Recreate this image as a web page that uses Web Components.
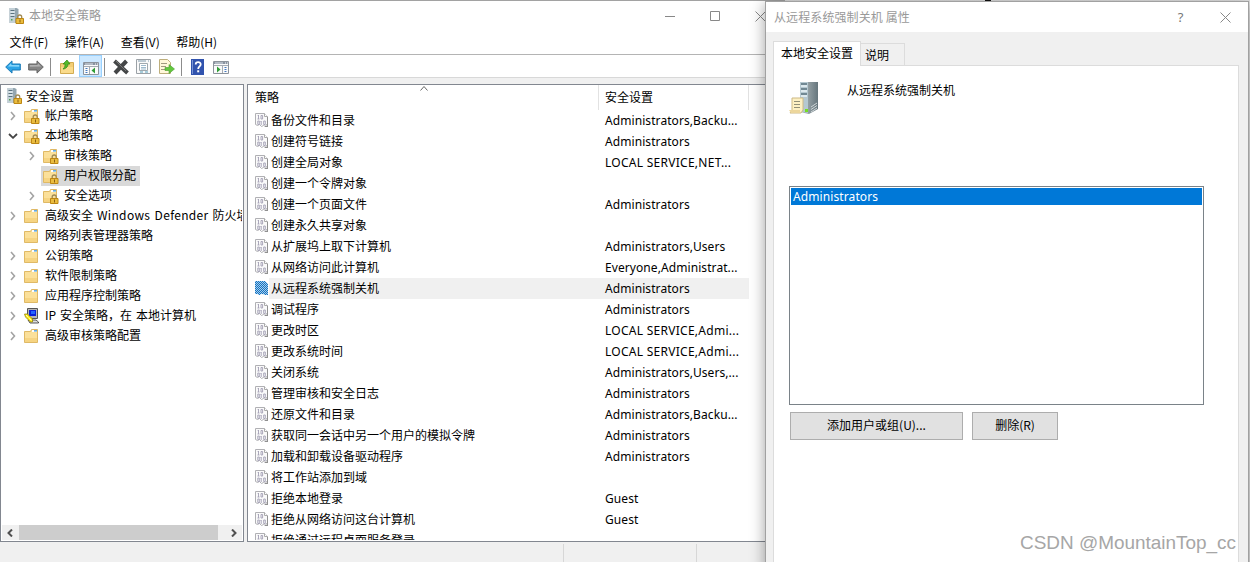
<!DOCTYPE html>
<html lang="zh-CN"><head><meta charset="utf-8"><title>本地安全策略</title>
<style>
body{margin:0;width:1250px;height:562px;overflow:hidden;position:relative;background:#c4c4c4;color:#000;font:12px/20px "Noto Sans CJK SC",sans-serif}
sec-console{position:absolute;left:0;top:0}
prop-dialog{position:absolute;left:765px;top:1px}
back-edge{position:absolute;left:766px;top:0}
water-mark{position:absolute;left:1020px;top:530px}
</style></head><body>
<back-edge></back-edge>
<sec-console></sec-console>
<prop-dialog title-text="从远程系统强制关机 属性"></prop-dialog>
<water-mark>CSDN @MountainTop_cc</water-mark>
<script>
const define=(name,html)=>customElements.define(name,class extends HTMLElement{
  constructor(){super();this.attachShadow({mode:'open'})}
  connectedCallback(){const t=document.createElement('template');t.innerHTML=typeof html==='function'?html(this):html;this.shadowRoot.replaceChildren(t.content.cloneNode(true))}
});
const folder='<path d="M.5 3.500h6l1-2h6v13H.5z" fill="#f8dc8c" stroke="#dfb966"/><path d="M1 4h12v10H1z" fill="#fbe09a"/><path d="M1 10h12v4H1z" fill="#f6d482"/><path d="M8 2h5v2H8z" fill="#fff"/><path d="M10 2.200h3v1.300h-3z" fill="#3f97d8"/>';
const lock='<g transform="translate(7.500 6)"><path d="M2.200 5V3a2 2 0 0 1 4 0v2" fill="none" stroke="#a08a55" stroke-width="1.300"/><path d="M.5 4.500h7.500v5H.5z" fill="#dfaa26" stroke="#bd8612"/><path d="M1 6h6.500M1 8h6.500" stroke="#f9d765" stroke-width=".8"/><path d="M4 5.500h1v3H4z" fill="#8c6010"/></g>';
const ICONS={
 server:['0 0 16 16','<path d="M1.500 0h7l2 1v13l-2 1h-7z" fill="#94a6b0"/><path d="M1.500 0H7v15H1.500z" fill="#c3d0d7"/><path d="M2.500 2.500h4M2.500 5.500h4M2.500 8.500h4" stroke="#5a727f"/><path d="M2.500 4h4M2.500 7h4" stroke="#eef6fa"/><path d="M3 11h1.500v1.500H3z" fill="#52a452"/>'+lock],
 folder:['0 0 16 16',folder],
 lockfolder:['0 0 16 16',folder+'<g transform="translate(-.5 0)">'+lock+'</g>'],
 ip:['0 0 16 16','<path d="M3.500 .5h10v10h-10z" fill="#b5b5b5" stroke="#555"/><path d="M5 2h7v6H5z" fill="#0a20d8"/><path d="M7 3h4v3H7z" fill="#2464ff"/><path d="M4 12h8l2.500 2v1H6z" fill="#ddd" stroke="#333" stroke-width=".8"/><path d="M.5 6h3l5 5v3h-2l-5-5z" fill="#ffee16" stroke="#8b7a00" stroke-width=".7"/><path d="M2 7l6 6" stroke="#fff" stroke-dasharray="1 1"/>'],
 policy:['0 0 14 16','<path d="M.5 1.500h9l3 3v9l-1-1-1 2-2-1-2 1-2-2-2 1-2-1z" fill="#fafafa" stroke="#b0b0b4"/><path d="M9.500 1.500v3h3" fill="#fff" stroke="#aaa"/><path d="M12.500 5v9M10 14.500h3" stroke="#909090"/><g fill="none" stroke="#a39fb4" stroke-width=".9"><path d="M3.500 3v4M2.500 7h2M2.700 3.500h1M2.800 9h1.500v3.500H2.800zM6 3.500h1.600V7H6zM6.200 9v4M5.500 9.500h.7M8.700 9h1.600v3.500H8.700z"/></g>'],
 policysel:['0 0 14 16','<defs><pattern id="p" width="2" height="2" patternUnits="userSpaceOnUse"><path d="M0 0h1v1H0zM1 1h1v1H1z" fill="#1173c4"/></pattern></defs><path d="M0 1h10l3 3v11h-2l-1 0-3-1-3 1-2-1H0z" fill="#a9cdea"/><path d="M0 1h10l3 3v11h-2l-1 0-3-1-3 1-2-1H0z" fill="url(#p)" shape-rendering="crispEdges"/>'],
 back:['0 0 16 14','<path d="M.7 7L7 .9V4h8.300v6H7v3.100z" fill="#2da4e6" stroke="#1879b6"/><path d="M3 6.600L6.200 3.300V5h8v1.700z" fill="#86d5fa"/>'],
 fwd:['0 0 16 14','<path d="M15.300 7L9 .9V4H.7v6H9v3.100z" fill="#858585" stroke="#626262"/><path d="M13 6.600L9.800 3.300V5h-8v1.700z" fill="#b1b1b1"/>'],
 up:['0 0 16 16','<path d="M.5 4.500h5l2-1h6v11H.5z" fill="#f4ce75" stroke="#d3ac52"/><path d="M1 8h12v6H1z" fill="#fadb8b"/><path d="M4 10c3-1 4-3 4-5h2L7 1 3 5h2c0 2 0 3-2 5z" fill="#55b92a" stroke="#318714" stroke-width=".7"/>'],
 tree:['0 0 16 14','<path d="M.5 1.500h15v12H.5z" fill="#fafafa" stroke="#8c939c"/><path d="M1 2h14v2H1z" fill="#8993a0"/><path d="M2 3h8" stroke="#dce2e9"/><path d="M12 3h1M14 3h1" stroke="#fff"/><path d="M1 5.500h14M6.500 6v7" stroke="#a5abb3"/><path d="M2.500 7.500h2M2.500 9.500h2M2.500 11.500h2" stroke="#477bc0"/><path d="M12 6.500v6L8.500 9.500z" fill="#2e9d35"/>'],
 pane:['0 0 16 14','<path d="M.5 1.500h15v12H.5z" fill="#fafafa" stroke="#8c939c"/><path d="M1 2h14v2H1z" fill="#8993a0"/><path d="M2 3h8" stroke="#dce2e9"/><path d="M12 3h1M14 3h1" stroke="#fff"/><path d="M1 5.500h14M9.500 6v7" stroke="#a5abb3"/><path d="M11.500 7.500h2M11.500 9.500h2M11.500 11.500h2" stroke="#477bc0"/><path d="M4 6.500v6l3.500-3z" fill="#2e9d35"/>'],
 del:['0 0 16 16','<path d="M1.500 2L14.500 14M13.500 2L2 14" stroke="#444647" stroke-width="4"/><path d="M3 2l10 10" stroke="#777"/>'],
 props:['0 0 15 16','<path d="M.5.5h14v14H.5z" fill="#f9f9f9" stroke="#9ba1a6"/><path d="M2 2h8M12 2h1" stroke="#809bad"/><path d="M3.500 4.500h8v7h-8z" fill="#fff" stroke="#a0a9ae"/><path d="M5 6.500h5M5 8.500h5M5 10h5" stroke="#9dbacd"/><path d="M4 13h3M9 13h3" stroke="#57a0bc"/>'],
 export:['0 0 16 16','<path d="M.5.5h8l3 3v11H.5z" fill="#fff8db" stroke="#bdae7c"/><path d="M2 4.500h6M2 7.500h5M2 10.500h4" stroke="#a09a80"/><path d="M6 8.500h4V5.500l5.500 4.500-5.500 4.500v-3H6z" fill="#62c83e" stroke="#4a9c2f" stroke-width=".6"/>'],
 help:['0 0 13 16','<path d="M0 0h13v16H0z" fill="#3153ae"/><path d="M1 1h1v14H1z" fill="#7794d5"/><path d="M4.700 5.500c0-3 5-3 5-.3C9.700 7.500 7.200 7.200 7.200 10" fill="none" stroke="#fff" stroke-width="1.800"/><path d="M6.200 11.300h2v2h-2z" fill="#fff"/>'],
 big:['0 0 32 34','<defs><linearGradient id="g"><stop stop-color="#b7c0c2"/><stop offset="1" stop-color="#66767d"/></linearGradient></defs><path d="M11 2l7-1h11v27l-9 5-9-2z" fill="url(#g)"/><path d="M11 1h8v31l-8-2z" fill="#b5c8d1"/><path d="M12 3h6M12 8h6M12 13h6" stroke="#5b737f" stroke-width="1.500"/><path d="M12 5h6M12 10h6M12 15h6" stroke="#eaf3f7" stroke-width="1.500"/><path d="M22 26l6-4M22 28.500l6-4M22 31l6-4" stroke="#cfd6d8"/><path d="M16 28h3v3h-3z" fill="#76de22"/><path d="M3 17h11v12l-2 3H1l2-3z" fill="#fdf0c3" stroke="#cdb985"/><path d="M0 29h11v3H2z" fill="#ecd69c"/><path d="M5 20.500h6M5 23.500h6M5 26.500h6" stroke="#918f78" stroke-width="1.200"/>'],
 min:['0 0 11 11','<path d="M0 5.500h10" stroke="#888"/>'],max:['0 0 11 11','<path d="M.5.5h9v9h-9z" fill="none" stroke="#888"/>'],
 close:['0 0 11 11','<path d="M.5.5l10 10M10.500.5l-10 10" stroke="#888"/>'],
 right:['0 0 6 10','<path d="M1 1l3.500 4L1 9" fill="none" stroke="#a3a3a3" stroke-width="1.600"/>'],
 down:['0 0 10 6','<path d="M1 1l4 3.800L9 1" fill="none" stroke="#444" stroke-width="1.800"/>'],
 sleft:['0 0 6 8','<path d="M5 .5L1.500 4 5 7.500" fill="none" stroke="#505050" stroke-width="2"/>'],
 sright:['0 0 6 8','<path d="M1 .5L4.500 4 1 7.500" fill="none" stroke="#505050" stroke-width="2"/>'],
 sort:['0 0 8 5','<path d="M.5 4.500l3.500-4 3.500 4" fill="none" stroke="#666"/>']
};
define('ui-icon',e=>{const i=ICONS[e.getAttribute('name')],v=i[0].split(' ');return `<style>:host{display:block;flex:none;width:${v[2]}px;height:${v[3]}px}svg{display:block}</style><svg width="${v[2]}" height="${v[3]}" viewBox="${i[0]}">${i[1]}</svg>`});
define('tree-row',e=>{const a=n=>e.getAttribute(n),x=a('exp'),root=x==='root';return `<style>:host{display:flex;height:20px;align-items:center;white-space:nowrap;padding-left:${a('indent')}px}.x{width:${x==='right'?12:x==='down'?14:19}px;flex:none}.r{display:flex;align-items:center;height:20px;padding:0 4px 0 2px;background:${e.hasAttribute('selected')?'#d9d9d9':'none'}}.t{margin-left:${root?4:5}px;line-height:${root?'20px':'18px'};height:20px;word-spacing:1.300px}</style>${root?'':`<span class="x">${x?`<ui-icon name="${x}"></ui-icon>`:''}</span>`}<div class="r"><ui-icon name="${a('icon')}"></ui-icon><span class="t"><slot></slot></span></div>`});
define('policy-row',e=>{const s=e.hasAttribute('selected'),v=e.getAttribute('value')||'';return `<style>:host{display:flex;height:21px;flex:none;line-height:19px;white-space:nowrap}ui-icon{margin:2px 0 0 7px}.n{padding-left:2px;width:334px}.v{width:144px}.n,.v{${s?'background:#f0f0f0':''}}.v span{font:12px/19px "Noto Sans",sans-serif;letter-spacing:${v.startsWith('LOCAL')?.27:.08}px}</style><ui-icon name="${s?'policysel':'policy'}"></ui-icon><span class="n"><slot></slot></span><span class="v"><span>${v}</span></span>`});
define('tool-bar',`<style>:host{display:flex;height:22px;align-items:center;border-bottom:1px solid #d8d8d8;padding-left:5px}ui-icon{margin-top:2px}.s{width:1px;height:18px;background:#8c8c8c;margin-top:2px}.on{width:21px;height:20px;border:1px solid #99d1ff;background:#cce8ff;display:flex;justify-content:center;align-items:center;margin-left:3px}.on ui-icon{margin:3px 0 0 0}</style>
<ui-icon name="back"></ui-icon><ui-icon name="fwd" style="margin-left:7px"></ui-icon><i class="s" style="margin-left:6px"></i><ui-icon name="up" style="margin-left:9px"></ui-icon><span class="on"><ui-icon name="tree"></ui-icon></span><i class="s" style="margin-left:2px"></i><ui-icon name="del" style="margin-left:8px"></ui-icon><ui-icon name="props" style="margin-left:7px"></ui-icon><ui-icon name="export" style="margin-left:8px"></ui-icon><i class="s" style="margin-left:6px"></i><ui-icon name="help" style="margin-left:9px"></ui-icon><ui-icon name="pane" style="margin-left:9px"></ui-icon>`);
const TREE=[[3,'root','server','安全设置'],[9,'right','lockfolder','帐户策略'],[7,'down','lockfolder','本地策略'],[28,'right','lockfolder','审核策略'],[21,'','lockfolder','用户权限分配',1],[28,'right','lockfolder','安全选项'],[9,'right','folder','高级安全 <span style="letter-spacing:.32px">Windows Defender</span> 防火墙'],[2,'','folder','网络列表管理器策略'],[9,'right','folder','公钥策略'],[9,'right','folder','软件限制策略'],[9,'right','folder','应用程序控制策略'],[9,'right','ip','IP 安全策略，在 本地计算机'],[9,'right','folder','高级审核策略配置']];
define('policy-tree',`<style>:host{display:flex;flex-direction:column;box-sizing:border-box;width:244px;height:458px;border:1px solid #828790;background:#fff;padding:1px}.rows{flex:1;overflow:hidden;margin-left:-1px}.sb{display:flex;align-items:center;height:15px;background:#f0f0f0;padding:0 5px}.sb i{height:15px;width:199px;background:#cdcdcd;margin:0 13px 0 6px}</style><div class="rows">${TREE.map(r=>`<tree-row indent="${r[0]}" exp="${r[1]}" icon="${r[2]}" ${r[4]?'selected':''}>${r[3]}</tree-row>`).join('')}</div><div class="sb"><ui-icon name="sleft"></ui-icon><i></i><ui-icon name="sright"></ui-icon></div>`);
const A='Administrators',LIST=[['备份文件和目录',A+',Backu...'],['创建符号链接',A],['创建全局对象','LOCAL SERVICE,NET...'],['创建一个令牌对象'],['创建一个页面文件',A],['创建永久共享对象'],['从扩展坞上取下计算机',A+',Users'],['从网络访问此计算机','Everyone,Administrat...'],['从远程系统强制关机',A,1],['调试程序',A],['更改时区','LOCAL SERVICE,Admi...'],['更改系统时间','LOCAL SERVICE,Admi...'],['关闭系统',A+',Users,...'],['管理审核和安全日志',A],['还原文件和目录',A+',Backu...'],['获取同一会话中另一个用户的模拟令牌',A],['加载和卸载设备驱动程序',A],['将工作站添加到域'],['拒绝本地登录','Guest'],['拒绝从网络访问这台计算机','Guest'],['拒绝通过远程桌面服务登录']];
define('policy-list',`<style>:host{display:flex;flex-direction:column;box-sizing:border-box;width:519px;height:458px;border:1px solid #828790;background:#fff;overflow:hidden}.h{display:flex;height:25px;flex:none;line-height:24px}.a,.b{box-sizing:border-box;border-right:1px solid #e2e2e2}.a{width:351px;padding-left:7px;display:grid;grid-template-columns:165px auto}.b{width:150px;padding-left:6px}.a ui-icon{margin-top:1px}.rows{flex:1;display:flex;flex-direction:column;overflow:hidden;margin-bottom:1px}</style><div class="h"><span class="a">策略<ui-icon name="sort"></ui-icon></span><span class="b">安全设置</span></div><div class="rows">${LIST.map(r=>`<policy-row value="${r[1]||''}" ${r[2]?'selected':''}>${r[0]}</policy-row>`).join('')}</div>`);
define('sec-console',`<style>:host{display:block;box-sizing:border-box;width:785px;height:562px;background:#fff;border-top:1px solid #a2a2a2}.t{height:30px;display:flex;align-items:center;padding-left:8px;color:#999}.t .n{margin-left:5px;width:636px;line-height:18px;height:20px}.t .c{margin-left:34px}.m{display:flex;height:23px;line-height:22px;padding-left:9.500px;gap:16.500px;border-bottom:1px solid #b4b4b4}.p{display:flex;gap:3px;background:#f0f0f0;padding-top:6px;padding-bottom:1px}.s{display:flex;background:#f0f0f0;height:19px}.s i{border-right:1px solid #d7d7d7;margin-top:1px;width:563px}.s i+i{width:132px}</style>
<div class="t"><ui-icon name="server"></ui-icon><span class="n">本地安全策略</span><ui-icon name="min"></ui-icon><ui-icon class="c" name="max"></ui-icon><ui-icon class="c" name="close"></ui-icon></div>
<div class="m"><span>文件(F)</span><span>操作(A)</span><span>查看(V)</span><span>帮助(H)</span></div><tool-bar></tool-bar><div class="p"><policy-tree></policy-tree><policy-list></policy-list></div><div class="s"><i></i><i></i></div>`);
define('win-button','<style>:host{display:block;box-sizing:border-box;height:28px;line-height:24px;border:1px solid #adadad;background:#e1e1e1;text-align:center}</style><slot></slot>');
define('prop-dialog',e=>`<style>:host{display:flex;flex-direction:column;box-sizing:border-box;width:484px;height:571px;border:1px solid #a1a1a1;background:#f0f0f0;box-shadow:0 3px 14px rgba(0,0,0,.38)}.t{height:30px;flex:none;background:#fff;display:flex;align-items:center;color:#999;padding-left:8px}.t span{width:401px;letter-spacing:.1px;line-height:19px;height:20px}.q{width:11px;text-align:center;font:13px "Noto Sans",sans-serif;color:#777}.t ui-icon{margin-left:34px}.tabs{display:flex;align-items:flex-end;height:24px;padding:9px 0 0 7px;z-index:1}.tab{box-sizing:border-box;border:1px solid #dcdcdc;border-bottom:0;height:22px;line-height:21px;padding-left:4px;width:44px}.on{height:25px;width:88px;margin-bottom:-1px;background:#fff;padding-left:7px;line-height:21px}.tab+.tab{border-left:0}.pg{margin:0 9px 0 7px;flex:1;border:1px solid #dcdcdc;background:#fff;padding:15px 0 0 15px}.hd{display:flex;height:105px}.hd span{margin-left:26px;line-height:17px}.lb{box-sizing:border-box;width:415px;height:219px;border:1px solid #7a8288;padding:1px}.lb div{background:#0078d7;color:#fff;height:17px;padding-left:2px;font:12px/17px "Noto Sans",sans-serif;letter-spacing:.1px}.bt{display:flex;gap:9px;padding:7px 0 0 1px}</style><div class="t"><span>${e.getAttribute('title-text')}</span><b class="q" style="font-weight:400">?</b><ui-icon name="close"></ui-icon></div><div class="tabs"><div class="tab on">本地安全设置</div><div class="tab">说明</div></div><div class="pg"><div class="hd"><ui-icon name="big"></ui-icon><span>从远程系统强制关机</span></div><div class="lb"><div>Administrators</div></div><div class="bt"><win-button style="width:173px">添加用户或组(U)...</win-button><win-button style="width:86px">删除(R)</win-button></div></div>`);
define('back-edge','<style>:host{display:flex;width:484px;height:562px;background:linear-gradient(90deg,#dcdcdc,#e6e6e6)}i{width:6px;height:2px;background:#111;margin-left:219px}</style><i></i>');
define('water-mark','<style>:host{display:block;font:18.950px/25px "Liberation Sans",sans-serif;color:#a6a6a6;white-space:nowrap}</style><slot></slot>');
</script></body></html>
